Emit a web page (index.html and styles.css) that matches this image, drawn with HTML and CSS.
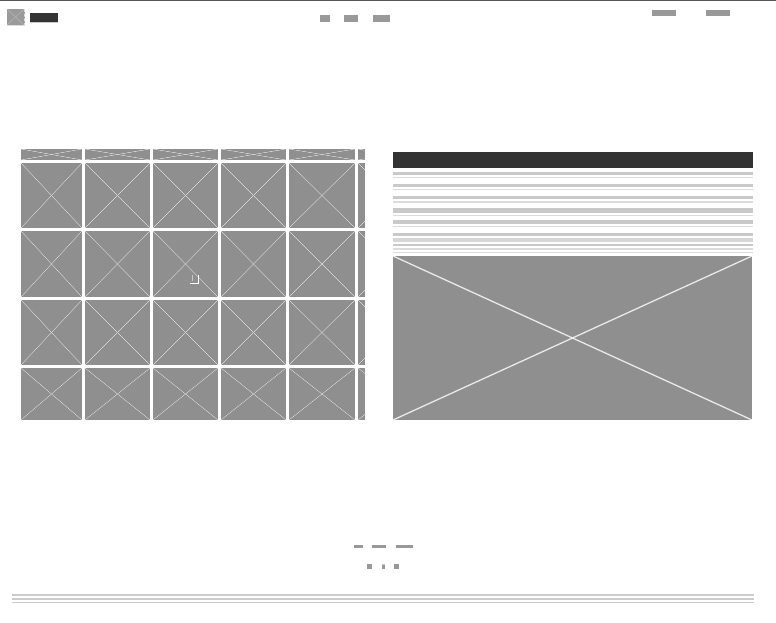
FILE: index.html
```html
<!DOCTYPE html>
<html lang="en">
<head>
	<meta charset="UTF-8">
	<title>Gallery</title>
	<link rel="stylesheet" href="styles.css">
</head>
<body>
<div id="page">
	<div id="header">
		<div class="brand">
			<span class="logo"></span>
			<span class="brand-name"></span>
		</div>
		<div class="nav">
			<span class="nav-a"></span>
			<span class="nav-b"></span>
			<span class="nav-c"></span>
		</div>
		<div class="user">
			<span class="user-a"></span>
			<span class="user-b"></span>
		</div>
	</div>

	<div id="main">
		<div id="gallery">
			<div class="grid">
				<div class="ph"></div><div class="ph"></div><div class="ph"></div><div class="ph"></div><div class="ph"></div><div class="ph"></div>
				<div class="ph"></div><div class="ph"></div><div class="ph"></div><div class="ph"></div><div class="ph"></div><div class="ph"></div>
				<div class="ph"></div><div class="ph"></div><div class="ph"></div><div class="ph"></div><div class="ph"></div><div class="ph"></div>
				<div class="ph"></div><div class="ph"></div><div class="ph"></div><div class="ph"></div><div class="ph"></div><div class="ph"></div>
				<div class="ph"></div><div class="ph"></div><div class="ph"></div><div class="ph"></div><div class="ph"></div><div class="ph"></div>
			</div>
			<span class="cursor"></span>
		</div>

		<div id="detail">
			<div class="title-bar"></div>
			<div class="lines">
				<div class="row r1"><i class="thick h3"></i><i class="thin h1"></i></div>
				<div class="row r2"><i class="thick h3"></i><i class="thin h1"></i></div>
				<div class="row r3"><i class="thick h3"></i><i class="thin h2"></i></div>
				<div class="row r4"><i class="thick h5"></i><i class="thin h1"></i></div>
				<div class="row r5"><i class="thick h4"></i><i class="thin h1"></i></div>
				<div class="row r6"><i class="thick h3"></i><i class="soft h4"></i></div>
				<div class="row r7"><i class="thick h2"></i><i class="thin h2"></i><i class="thin h1"></i></div>
			</div>
			<div class="ph big"></div>
		</div>
	</div>

	<div id="pager">
		<div class="pages">
			<span class="pg-a"></span>
			<span class="pg-b"></span>
			<span class="pg-c"></span>
		</div>
		<div class="dots">
			<span class="dot"></span>
			<span class="dot narrow"></span>
			<span class="dot"></span>
		</div>
	</div>

	<div id="footer">
		<div class="fl fl-1"></div>
		<div class="fl fl-2"></div>
		<div class="fl fl-3"></div>
	</div>
</div>
</body>
</html>
```

FILE: styles.css
```css
*{
	margin: 0;
	padding: 0;
}
body{
	font-family: "Liberation Sans", Arial, sans-serif;
	background: #fff;
}
#page{
	width: 776px;
	height: 623px;
	border-top: 1px solid #555;
	overflow: hidden;
}

/* header */
#header{
	display: flex;
	justify-content: space-between;
	align-items: flex-start;
	padding: 8px 46px 0 7px;
	height: 18px;
}
.brand{
	display: flex;
	align-items: flex-start;
}
.logo{
	display: block;
	width: 17px;
	height: 16px;
	border-right: 1px dashed #ddd;
	border-bottom: 1px solid #ddd;
	background:
		linear-gradient(to top right, transparent calc(50% - 0.7px), #b4b4b4 50%, transparent calc(50% + 0.7px)),
		linear-gradient(to bottom right, transparent calc(50% - 0.7px), #b4b4b4 50%, transparent calc(50% + 0.7px)),
		#9a9a9a;
}
.brand-name{
	display: block;
	width: 28px;
	height: 9px;
	margin: 4px 0 0 5px;
	background: #333;
	border-bottom: 1px solid #ccc;
}
.nav{
	display: flex;
	margin-top: 6px;
}
.nav span, .user span, .pages span{
	display: block;
	background: #999;
}
.nav-a{ width: 10px; height: 7px; }
.nav-b{ width: 14px; height: 7px; margin-left: 14px; }
.nav-c{ width: 17px; height: 7px; margin-left: 15px; }
.user{
	display: flex;
	margin-top: 1px;
}
.user-a, .user-b{
	width: 24px;
	height: 6px;
}
.user-b{ margin-left: 30px; }

/* main */
#main{
	display: flex;
	align-items: flex-start;
	margin-top: 122px;
	padding-left: 21px;
}
#gallery{
	position: relative;
	width: 344px;
	height: 271px;
	overflow: hidden;
}
.grid{
	display: grid;
	grid-template-columns: 61px 65px 65px 65px 66px 65px;
	grid-template-rows: 11px 65px 66px 65px 52px;
	gap: 3px;
	width: 420px;
}
.ph{
	background:
		linear-gradient(to top right, transparent calc(50% - 0.6px), #d4d4d4 50%, transparent calc(50% + 0.6px)),
		linear-gradient(to bottom right, transparent calc(50% - 0.6px), #d4d4d4 50%, transparent calc(50% + 0.6px)),
		#8f8f8f;
}
.cursor{
	position: absolute;
	left: 169px;
	top: 126px;
	width: 8px;
	height: 8px;
	border-right: 1px solid #fff;
	border-bottom: 1px solid #fff;
}
.cursor:before{
	content: "";
	position: absolute;
	left: 2px;
	top: 0;
	width: 1px;
	height: 6px;
	background: #c8c8c8;
}

#detail{
	width: 360px;
	margin: 3px 0 0 28px;
}
.title-bar{
	height: 16px;
	background: #333;
}
.lines{
	padding-top: 4px;
	height: 84px;
}
.row{
	display: flex;
	flex-direction: column;
	height: 12px;
}
.row i{
	display: block;
	margin-bottom: 2px;
}
.r5{ height: 13px; }
.r6{ height: 11px; }
.thick{ background: #c9c9c9; }
.thin{ background: #dcdcdc; }
.soft{ background: #d6d6d6; }
.h1{ height: 1px; }
.h2{ height: 2px; }
.h3{ height: 3px; }
.h4{ height: 4px; }
.h5{ height: 5px; }
.big{
	height: 164px;
	margin-right: 1px;
	background:
		linear-gradient(to top right, transparent calc(50% - 1.2px), #fafafa 50%, transparent calc(50% + 1.2px)),
		linear-gradient(to bottom right, transparent calc(50% - 1.2px), #fafafa 50%, transparent calc(50% + 1.2px)),
		#8f8f8f;
}

/* pager */
#pager{
	display: flex;
	flex-direction: column;
	align-items: center;
	margin-top: 125px;
	padding-right: 10px;
}
.pages{
	display: flex;
}
.pg-a{ width: 9px; height: 3px; }
.pg-b{ width: 14px; height: 3px; margin-left: 9px; }
.pg-c{ width: 17px; height: 3px; margin-left: 10px; }
.dots{
	display: flex;
	margin-top: 16px;
}
.dot{
	display: block;
	width: 5px;
	height: 5px;
	background: #999;
}
.dot.narrow{
	width: 3px;
	margin: 0 9px 0 10px;
	border-top: 1px solid #ccc;
	height: 4px;
}

/* footer */
#footer{
	margin: 25px 22px 0 12px;
}
.fl{
	background: #ccc;
}
.fl-1{ height: 2px; }
.fl-2{ height: 2px; margin-top: 2px; }
.fl-3{ height: 1px; margin-top: 2px; }
```
